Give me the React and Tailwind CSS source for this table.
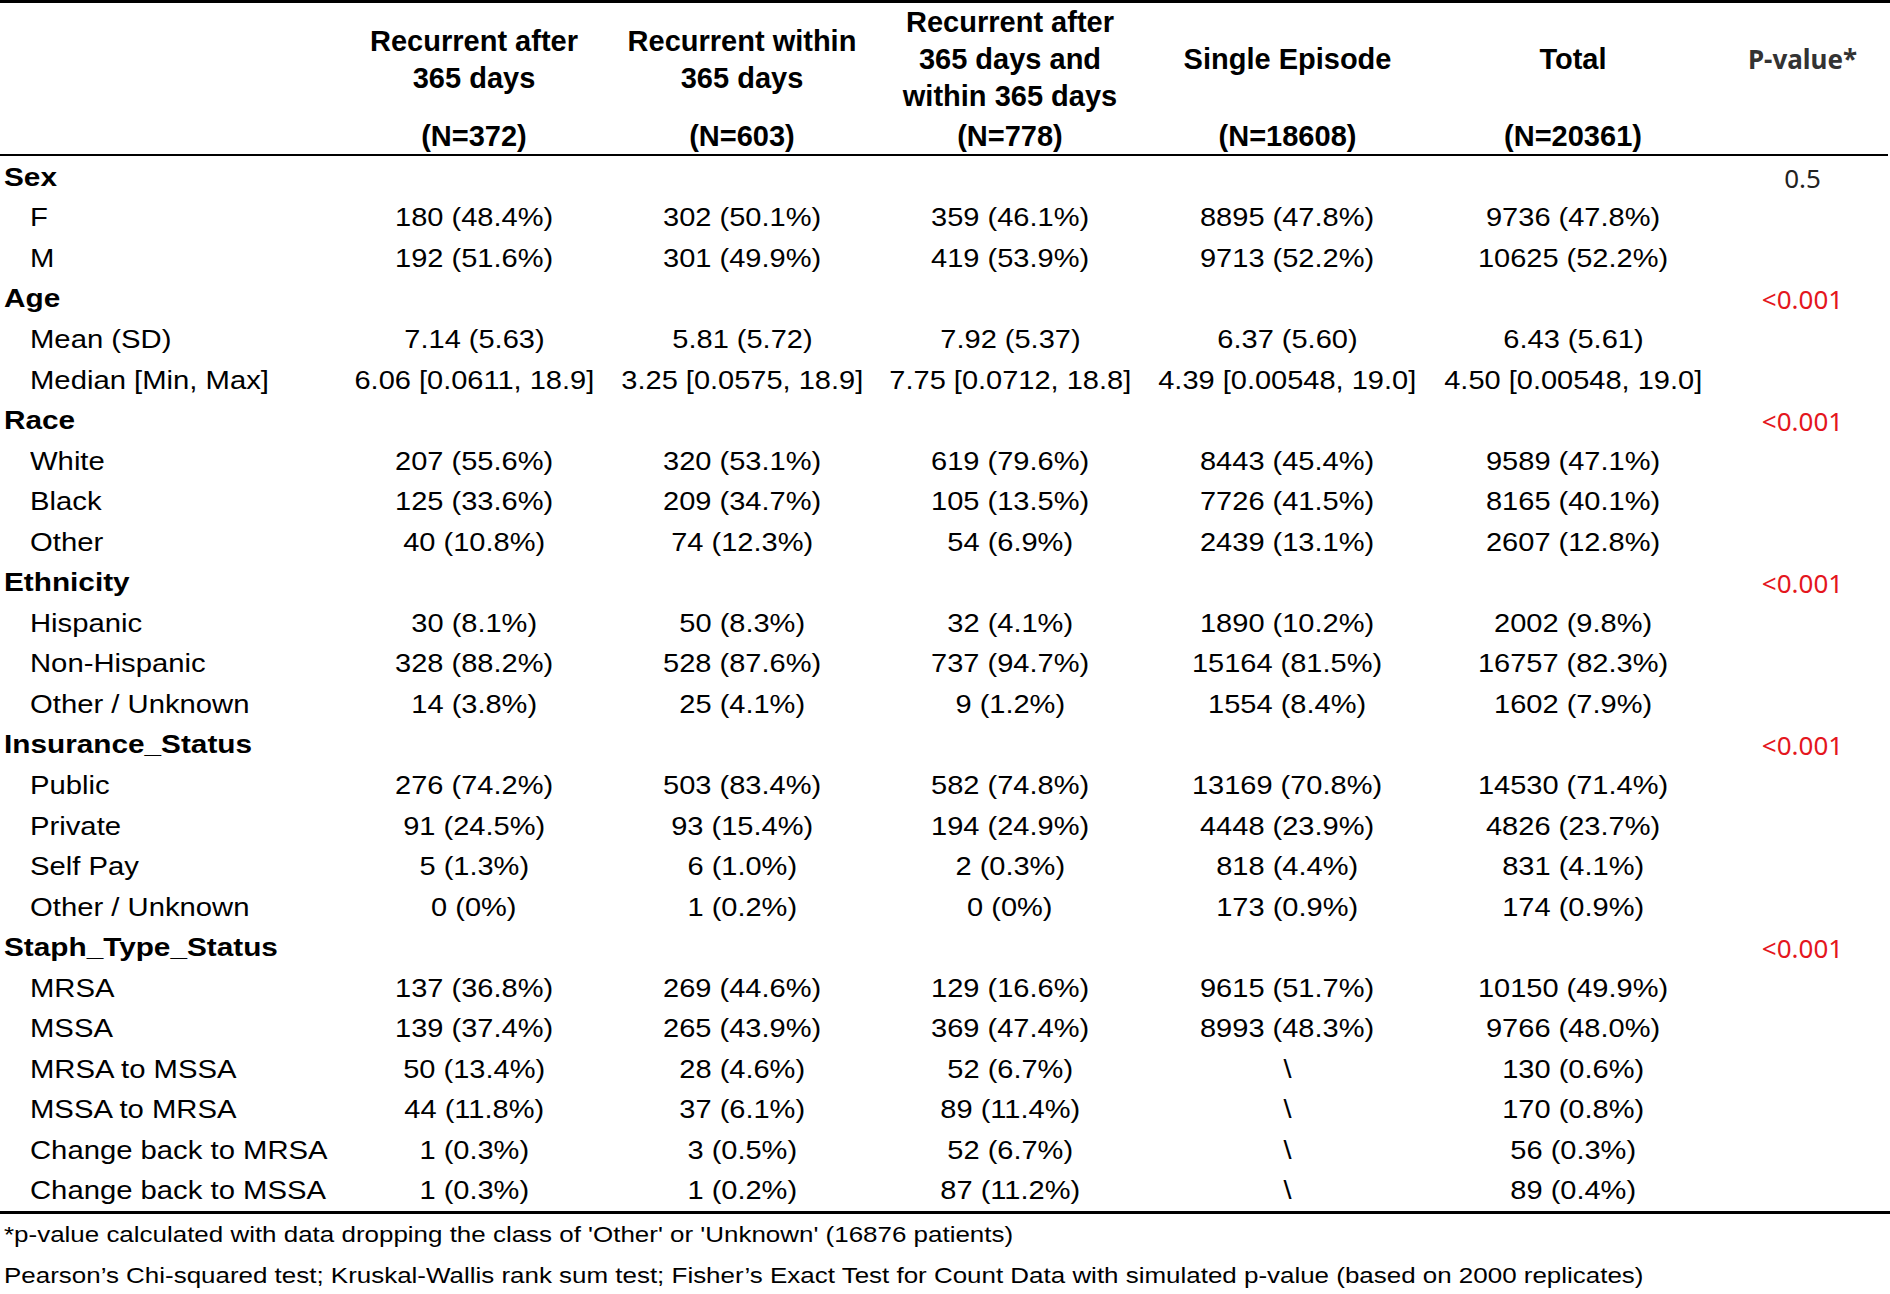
const cols = [
  { title: ["Recurrent after", "365 days"], n: "(N=372)" },
  { title: ["Recurrent within", "365 days"], n: "(N=603)" },
  { title: ["Recurrent after", "365 days and", "within 365 days"], n: "(N=778)" },
  { title: ["Single Episode"], n: "(N=18608)" },
  { title: ["Total"], n: "(N=20361)" },
];

const groups = [
  {
    name: "Sex",
    p: "0.5",
    rows: [
      ["F", "180 (48.4%)", "302 (50.1%)", "359 (46.1%)", "8895 (47.8%)", "9736 (47.8%)"],
      ["M", "192 (51.6%)", "301 (49.9%)", "419 (53.9%)", "9713 (52.2%)", "10625 (52.2%)"],
    ],
  },
  {
    name: "Age",
    p: "<0.001",
    rows: [
      ["Mean (SD)", "7.14 (5.63)", "5.81 (5.72)", "7.92 (5.37)", "6.37 (5.60)", "6.43 (5.61)"],
      [
        "Median [Min, Max]",
        "6.06 [0.0611, 18.9]",
        "3.25 [0.0575, 18.9]",
        "7.75 [0.0712, 18.8]",
        "4.39 [0.00548, 19.0]",
        "4.50 [0.00548, 19.0]",
      ],
    ],
  },
  {
    name: "Race",
    p: "<0.001",
    rows: [
      ["White", "207 (55.6%)", "320 (53.1%)", "619 (79.6%)", "8443 (45.4%)", "9589 (47.1%)"],
      ["Black", "125 (33.6%)", "209 (34.7%)", "105 (13.5%)", "7726 (41.5%)", "8165 (40.1%)"],
      ["Other", "40 (10.8%)", "74 (12.3%)", "54 (6.9%)", "2439 (13.1%)", "2607 (12.8%)"],
    ],
  },
  {
    name: "Ethnicity",
    p: "<0.001",
    rows: [
      ["Hispanic", "30 (8.1%)", "50 (8.3%)", "32 (4.1%)", "1890 (10.2%)", "2002 (9.8%)"],
      ["Non-Hispanic", "328 (88.2%)", "528 (87.6%)", "737 (94.7%)", "15164 (81.5%)", "16757 (82.3%)"],
      ["Other / Unknown", "14 (3.8%)", "25 (4.1%)", "9 (1.2%)", "1554 (8.4%)", "1602 (7.9%)"],
    ],
  },
  {
    name: "Insurance_Status",
    p: "<0.001",
    rows: [
      ["Public", "276 (74.2%)", "503 (83.4%)", "582 (74.8%)", "13169 (70.8%)", "14530 (71.4%)"],
      ["Private", "91 (24.5%)", "93 (15.4%)", "194 (24.9%)", "4448 (23.9%)", "4826 (23.7%)"],
      ["Self Pay", "5 (1.3%)", "6 (1.0%)", "2 (0.3%)", "818 (4.4%)", "831 (4.1%)"],
      ["Other / Unknown", "0 (0%)", "1 (0.2%)", "0 (0%)", "173 (0.9%)", "174 (0.9%)"],
    ],
  },
  {
    name: "Staph_Type_Status",
    p: "<0.001",
    rows: [
      ["MRSA", "137 (36.8%)", "269 (44.6%)", "129 (16.6%)", "9615 (51.7%)", "10150 (49.9%)"],
      ["MSSA", "139 (37.4%)", "265 (43.9%)", "369 (47.4%)", "8993 (48.3%)", "9766 (48.0%)"],
      ["MRSA to MSSA", "50 (13.4%)", "28 (4.6%)", "52 (6.7%)", "\\", "130 (0.6%)"],
      ["MSSA to MRSA", "44 (11.8%)", "37 (6.1%)", "89 (11.4%)", "\\", "170 (0.8%)"],
      ["Change back to MRSA", "1 (0.3%)", "3 (0.5%)", "52 (6.7%)", "\\", "56 (0.3%)"],
      ["Change back to MSSA", "1 (0.3%)", "1 (0.2%)", "87 (11.2%)", "\\", "89 (0.4%)"],
    ],
  },
];

const grid = "grid grid-cols-[340px_268px_268px_268px_287px_284px_175px]";

function PCell({ value }) {
  const red = value.startsWith("<");
  return (
    <div
      className={`flex items-center justify-center font-['Noto_Sans',sans-serif] text-[26px] ${
        red ? "text-[#e4161d]" : "text-[#222] pt-[1px]"
      }`}
    >
      {value}
    </div>
  );
}

function Row({ label, values }) {
  return (
    <div className={`${grid} h-[40.55px] items-center`}>
      <div className="pl-[30px] whitespace-nowrap">
        <span className="inline-block origin-left scale-x-[1.17]">{label}</span>
      </div>
      {values.map((v, i) => (
        <div key={i} className="text-center whitespace-nowrap">
          <span className="inline-block scale-x-[1.16]">{v}</span>
        </div>
      ))}
      <div />
    </div>
  );
}

export default function App() {
  return (
    <div className="w-[1890px] min-h-[1294px] bg-white text-black font-['Liberation_Sans',Arial,sans-serif]">
      {/* header */}
      <div className="border-t-[3px] border-black">
        <div className={`${grid} h-[113px] items-center text-[29px] font-bold leading-[37px]`}>
          <div />
          {cols.map((c, i) => (
            <div key={i} className="flex flex-col items-center text-center whitespace-nowrap">
              {c.title.map((t) => (
                <span key={t}>{t}</span>
              ))}
            </div>
          ))}
          <div className="text-center font-['Noto_Sans',sans-serif] text-[26px] text-[#333]">
            P-value*
          </div>
        </div>
        <div className={`${grid} h-[38px] items-center pt-[2px] text-[29px] font-bold leading-[37px]`}>
          <div />
          {cols.map((c, i) => (
            <div key={i} className="text-center">
              {c.n}
            </div>
          ))}
          <div />
        </div>
      </div>

      {/* body */}
      <div className="border-t-2 border-black mr-[2px] pt-[1px]" />
      <div className="text-[25px] leading-none">
        {groups.map((g) => (
          <div key={g.name}>
            <div className={`${grid} h-[40.55px] items-center`}>
              <div className="pl-[4px] font-bold whitespace-nowrap">
                <span className="inline-block origin-left scale-x-[1.19]">{g.name}</span>
              </div>
              <div />
              <div />
              <div />
              <div />
              <div />
              <PCell value={g.p} />
            </div>
            {g.rows.map((r) => (
              <Row key={g.name + r[0]} label={r[0]} values={r.slice(1)} />
            ))}
          </div>
        ))}
      </div>

      {/* footnotes */}
      <div className="border-t-[3px] border-black text-[22.5px] leading-[41px] whitespace-nowrap">
        <div className="pl-[4px]">
          <span className="inline-block origin-left scale-x-[1.153]">
            *p-value calculated with data dropping the class of 'Other' or 'Unknown' (16876 patients)
          </span>
        </div>
        <div className="pl-[4px]">
          <span className="inline-block origin-left scale-x-[1.153]">
            Pearson’s Chi-squared test; Kruskal-Wallis rank sum test; Fisher’s Exact Test for Count Data with
            simulated p-value (based on 2000 replicates)
          </span>
        </div>
      </div>
    </div>
  );
}
